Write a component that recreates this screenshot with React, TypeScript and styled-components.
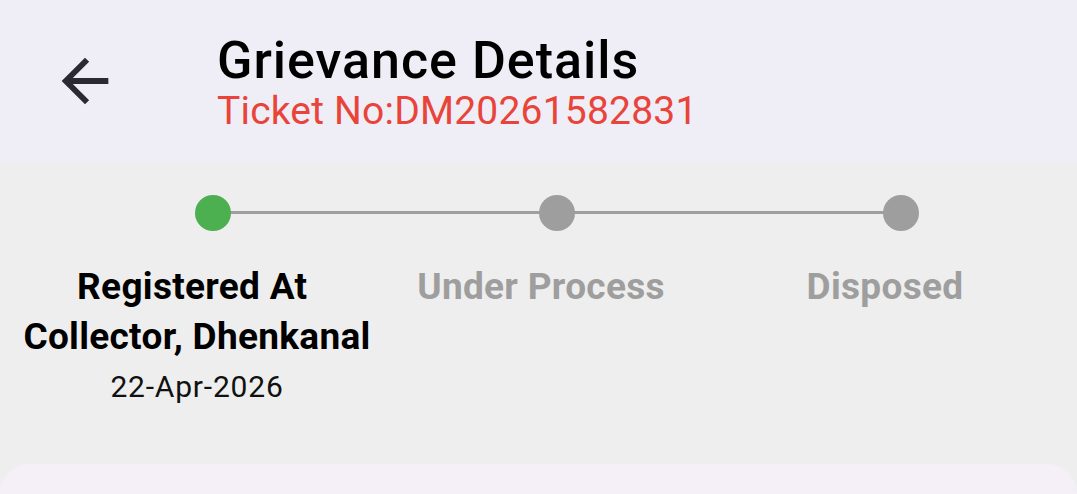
import React from 'react'
import styled, { createGlobalStyle } from 'styled-components'

const GlobalStyle = createGlobalStyle`
    html, body {
        margin: 0;
        padding: 0;
        background: #eeeeee;
        font-family: Roboto, "Noto Sans", sans-serif;
    }
`

interface Step {
    lines: string[];
    date?: string;
    done?: boolean;
}

// first line keeps the trailing space of the wrapped text, as the app does
const steps: Step[] = [
    { lines: ['Registered At\u00a0', 'Collector, Dhenkanal'], date: '22-Apr-2026', done: true },
    { lines: ['Under Process'] },
    { lines: ['Disposed'] },
]

const App = () => {
    return (
        <Page>
            <GlobalStyle />
            <Header>
                <BackButton aria-label="back">
                    <svg width="70" height="70" viewBox="0 0 24 24">
                        <path d="M20 11H7.83l5.59-5.59L12 4l-8 8 8 8 1.41-1.41L7.83 13H20v-2z" fill="#2b2a30" />
                    </svg>
                </BackButton>
                <Titles>
                    <Title>Grievance Details</Title>
                    <Ticket>Ticket No:DM20261582831</Ticket>
                </Titles>
            </Header>
            <Tracker>
                <Dots>
                    {steps.map((s, i) => (
                        <DotCell key={s.lines[0]} $first={i === 0} $last={i === steps.length - 1}>
                            <Dot $done={s.done} />
                        </DotCell>
                    ))}
                </Dots>
                <Labels>
                    {steps.map((s) => (
                        <Label key={s.lines[0]}>
                            {s.lines.map((l) => (
                                <StepTitle key={l} $done={s.done}>{l}</StepTitle>
                            ))}
                            {s.date && <StepDate>{s.date}</StepDate>}
                        </Label>
                    ))}
                </Labels>
            </Tracker>
            <Sheet />
        </Page>
    )
}

const Page = styled.div`
    width: 1077px;
    height: 494px;
    overflow: hidden;
    display: flex;
    flex-direction: column;
    background: #eeeeee;
`

const Header = styled.header`
    height: 163px;
    flex-shrink: 0;
    background: #efedf5;
    display: flex;
    align-items: flex-start;
    padding-left: 50px;
    box-sizing: border-box;
`

const BackButton = styled.div`
    width: 70px;
    height: 70px;
    margin-top: 46px;
    margin-right: 97px;
    display: flex;
    align-items: center;
    justify-content: center;
`

const Titles = styled.div`
    display: flex;
    flex-direction: column;
    padding-top: 33px;
`

const Title = styled.h1`
    margin: 0;
    font-size: 52px;
    line-height: 56px;
    font-weight: 500;
    letter-spacing: 1px;
    color: #000000;
`

const Ticket = styled.div`
    font-size: 39px;
    line-height: 44px;
    font-weight: 400;
    letter-spacing: 0.2px;
    color: #e8443a;
`

const Tracker = styled.section`
    padding-top: 32px;
`

const Dots = styled.div`
    display: grid;
    grid-template-columns: repeat(3, 344px);
    padding-left: 41px;
`

const DotCell = styled.div<{ $first?: boolean; $last?: boolean }>`
    position: relative;
    height: 36px;
    display: flex;
    justify-content: center;

    &::before, &::after {
        content: '';
        position: absolute;
        top: 16px;
        height: 3px;
        background: #9e9e9e;
    }
    &::before {
        left: 0;
        right: 50%;
        display: ${p => (p.$first ? 'none' : 'block')};
    }
    &::after {
        left: 50%;
        right: 0;
        display: ${p => (p.$last ? 'none' : 'block')};
    }
`

const Dot = styled.div<{ $done?: boolean }>`
    position: relative;
    z-index: 1;
    width: 36px;
    height: 36px;
    border-radius: 50%;
    background: ${p => (p.$done ? '#4caf50' : '#9e9e9e')};
`

const Labels = styled.div`
    display: grid;
    grid-template-columns: repeat(3, 344px);
    padding-left: 25px;
    margin-top: 31px;
    height: 202px;
`

const Label = styled.div`
    display: flex;
    flex-direction: column;
    align-items: center;
    text-align: center;
`

const StepTitle = styled.div<{ $done?: boolean }>`
    font-size: 37px;
    line-height: 50px;
    font-weight: 700;
    letter-spacing: 0.3px;
    white-space: pre;
    color: ${p => (p.$done ? '#000000' : '#9e9e9e')};
`

const StepDate = styled.div`
    margin-top: 7px;
    font-size: 30px;
    line-height: 36px;
    letter-spacing: 0.8px;
    color: #111111;
`

const Sheet = styled.div`
    flex: 1;
    background: #f5f0f7;
    border-radius: 30px 30px 0 0;
`

export default App
